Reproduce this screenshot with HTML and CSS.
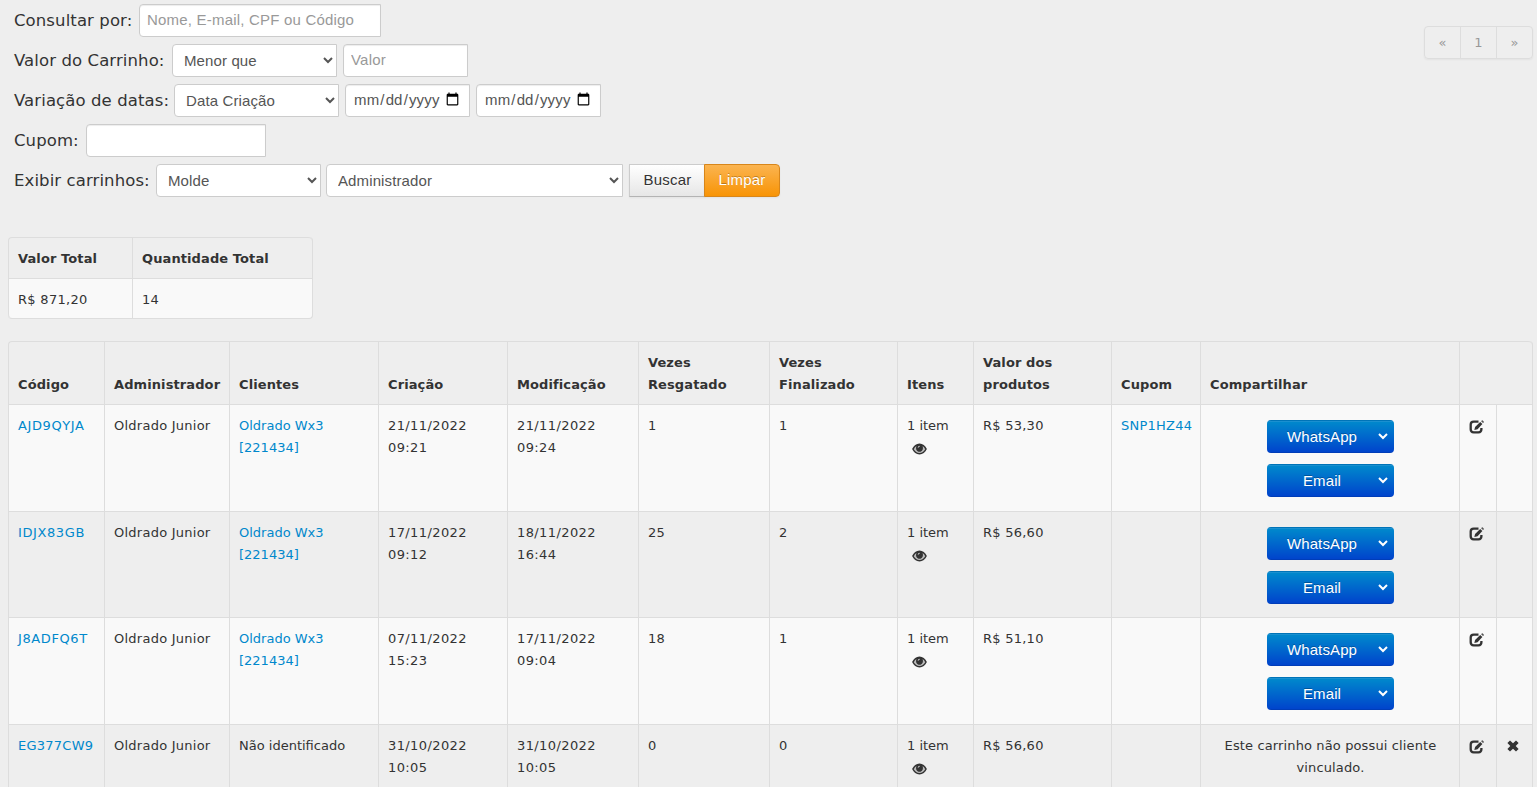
FILE: index.html
```html
<!DOCTYPE html>
<html lang="pt-br">
<head>
    <meta charset="UTF-8">
    <meta name="viewport" content="width=device-width, initial-scale=1.0">
    <title>Carrinhos</title>
    <link rel="stylesheet" href="styles.css">
</head>
<body>
    <!-- icons -->
    <svg class="sprite" width="0" height="0">
        <symbol id="icon-eye" viewBox="0 0 15 12">
            <path d="M7.500.5C4.300.5 1.700 2.600.1 6c1.600 3.400 4.200 5.500 7.400 5.500S13.300 9.400 14.900 6C13.300 2.600 10.700.5 7.500.5z" fill="#333"/>
            <path d="M1.800 6.200C2.500 4.700 3.300 3.600 4.400 2.900 3.400 6 4.700 8.700 7.500 8.700s4.100-2.700 3.100-5.800c1.100.7 1.900 1.800 2.600 3.300-1.300 2.300-3.300 3.700-5.700 3.700S3.100 8.500 1.800 6.200z" fill="#bbb"/>
            <path d="M5.700 4.800c.2-1.200 1-2 2.200-2-.3 1.100-1 1.800-2.200 2z" fill="#ddd"/>
        </symbol>
        <symbol id="icon-edit" viewBox="0 0 16 14">
            <path d="M9.500 1.600H4.700Q1.700 1.600 1.700 4.600v4.700q0 3 3 3h4.700q3 0 3-3V8" fill="none" stroke="#333" stroke-width="2.300"/>
            <path d="M5.300 10.100l.8-3.200L11.200 1.900l2.200 2.200L8.500 9.200z" fill="#333"/>
            <path d="M12.100 1.200l.7-.7q.5-.4 1 0l.9.9q.5.500 0 1l-.7.7z" fill="#555"/>
        </symbol>
        <symbol id="icon-remove" viewBox="0 0 12 12">
            <path d="M3 .4L6 3.300 9 .4 11.600 3 8.700 6l2.900 3L9 11.600 6 8.700 3 11.600.4 9l2.900-3L.4 3z" fill="#333"/>
        </symbol>
    </svg>

    <div class="topo">
        <form class="filtros">
            <div class="linha">
                <label class="l-busca">Consultar por:</label>
                <input type="text" class="campo-busca" placeholder="Nome, E-mail, CPF ou Código">
            </div>
            <div class="linha">
                <label class="l-valor">Valor do Carrinho:</label>
                <select><option>Menor que</option><option>Maior que</option></select>
                <input type="text" class="campo-valor" placeholder="Valor">
            </div>
            <div class="linha">
                <label class="l-datas">Variação de datas:</label>
                <select><option>Data Criação</option><option>Data Modificação</option></select>
                <input type="date">
                <input type="date">
            </div>
            <div class="linha">
                <label class="l-cupom">Cupom:</label>
                <input type="text" class="campo-cupom">
            </div>
            <div class="linha">
                <label class="l-exibir">Exibir carrinhos:</label>
                <select><option>Molde</option></select>
                <select class="select-admin"><option>Administrador</option></select>
                <div class="btn-group">
                    <button type="button" class="btn">Buscar</button><button type="button" class="btn btn-warning">Limpar</button>
                </div>
            </div>
        </form>
        <ul class="pagination">
            <li>«</li>
            <li>1</li>
            <li>»</li>
        </ul>
    </div>

    <table class="table table-total">
        <colgroup><col class="c-total"><col class="c-qtd"></colgroup>
        <thead>
            <tr><th>Valor Total</th><th>Quantidade Total</th></tr>
        </thead>
        <tbody>
            <tr><td>R$ 871,20</td><td>14</td></tr>
        </tbody>
    </table>

    <table class="table table-carrinhos">
        <colgroup>
            <col class="c-codigo"><col class="c-admin"><col class="c-cliente"><col class="c-criacao"><col class="c-modif">
            <col class="c-resgatado"><col class="c-finalizado"><col class="c-itens"><col class="c-valor"><col class="c-cupom">
            <col class="c-compartilhar"><col class="c-editar"><col class="c-remover">
        </colgroup>
        <thead>
            <tr>
                <th>Código</th>
                <th>Administrador</th>
                <th>Clientes</th>
                <th>Criação</th>
                <th>Modificação</th>
                <th>Vezes Resgatado</th>
                <th>Vezes Finalizado</th>
                <th>Itens</th>
                <th>Valor dos produtos</th>
                <th>Cupom</th>
                <th>Compartilhar</th>
                <th colspan="2"></th>
            </tr>
        </thead>
        <tbody>
            <tr>
                <td class="codigo"><a href="#">AJD9QYJA</a></td>
                <td>Oldrado Junior</td>
                <td class="cliente"><a href="#">Oldrado Wx3 [221434]</a></td>
                <td class="data">21/11/2022 09:21</td>
                <td class="data">21/11/2022 09:24</td>
                <td>1</td>
                <td>1</td>
                <td class="itens">1 item <svg class="icon-eye"><use href="#icon-eye"/></svg></td>
                <td>R$ 53,30</td>
                <td><a href="#">SNP1HZ44</a></td>
                <td class="compartilhar">
                    <select class="btn-primary"><option>WhatsApp</option></select>
                    <select class="btn-primary"><option>Email</option></select>
                </td>
                <td><svg class="icon-edit"><use href="#icon-edit"/></svg></td>
                <td></td>
            </tr>
            <tr>
                <td class="codigo"><a href="#">IDJX83GB</a></td>
                <td>Oldrado Junior</td>
                <td class="cliente"><a href="#">Oldrado Wx3 [221434]</a></td>
                <td class="data">17/11/2022 09:12</td>
                <td class="data">18/11/2022 16:44</td>
                <td>25</td>
                <td>2</td>
                <td class="itens">1 item <svg class="icon-eye"><use href="#icon-eye"/></svg></td>
                <td>R$ 56,60</td>
                <td></td>
                <td class="compartilhar">
                    <select class="btn-primary"><option>WhatsApp</option></select>
                    <select class="btn-primary"><option>Email</option></select>
                </td>
                <td><svg class="icon-edit"><use href="#icon-edit"/></svg></td>
                <td></td>
            </tr>
            <tr>
                <td class="codigo"><a href="#">J8ADFQ6T</a></td>
                <td>Oldrado Junior</td>
                <td class="cliente"><a href="#">Oldrado Wx3 [221434]</a></td>
                <td class="data">07/11/2022 15:23</td>
                <td class="data">17/11/2022 09:04</td>
                <td>18</td>
                <td>1</td>
                <td class="itens">1 item <svg class="icon-eye"><use href="#icon-eye"/></svg></td>
                <td>R$ 51,10</td>
                <td></td>
                <td class="compartilhar">
                    <select class="btn-primary"><option>WhatsApp</option></select>
                    <select class="btn-primary"><option>Email</option></select>
                </td>
                <td><svg class="icon-edit"><use href="#icon-edit"/></svg></td>
                <td></td>
            </tr>
            <tr>
                <td><a href="#">EG377CW9</a></td>
                <td>Oldrado Junior</td>
                <td class="cliente">Não identificado</td>
                <td class="data">31/10/2022 10:05</td>
                <td class="data">31/10/2022 10:05</td>
                <td>0</td>
                <td>0</td>
                <td class="itens">1 item <svg class="icon-eye"><use href="#icon-eye"/></svg></td>
                <td>R$ 56,60</td>
                <td></td>
                <td class="sem-cliente">Este carrinho não possui cliente vinculado.</td>
                <td><svg class="icon-edit"><use href="#icon-edit"/></svg></td>
                <td><svg class="icon-remove"><use href="#icon-remove"/></svg></td>
            </tr>
        </tbody>
    </table>
</body>
</html>
```
FILE: styles.css
```css
* {
    box-sizing: border-box;
}
html {
    overflow: hidden;
}
body {
    margin: 0;
    padding: 0 4px 0 8px;
    height: 787px;
    overflow: hidden;
    background-color: #eee;
    color: #333;
    font-family: Verdana, "DejaVu Sans", sans-serif;
    font-size: 13px;
    line-height: 22px;
}
a {
    color: #08c;
    text-decoration: none;
}
.sprite {
    position: absolute;
}

/* filtros */
.topo {
    display: flex;
    justify-content: space-between;
    align-items: flex-start;
    height: 237px;
}
.filtros {
    padding-left: 6px;
}
.linha {
    display: flex;
    align-items: center;
    height: 40px;
    gap: 6px;
}
.linha label {
    padding-top: 2px;
    font-size: 16.5px;
    line-height: 22px;
    letter-spacing: 0.1px;
    white-space: nowrap;
}
.l-busca { width: 119px; }
.l-valor { width: 152px; }
.l-datas { width: 154px; }
.l-cupom { width: 66px; }
.l-exibir { width: 136px; }
input,
select {
    height: 33px;
    border: 1px solid #ccc;
    border-radius: 4px 0 0 4px;
    background-color: #fff;
    color: #555;
    font-family: Arial, "Liberation Sans", sans-serif;
    font-size: 15px;
    margin: 0;
}
input {
    padding: 4px 7px 6px;
    box-shadow: inset 0 1px 1px rgba(0,0,0,0.075);
}
input::placeholder {
    color: #999;
    letter-spacing: 0.2px;
}
select {
    width: 165px;
    padding: 4px 6px 4px 7px;
    letter-spacing: 0.12px;
}
input[type="date"] {
    width: 125px;
    padding-top: 4px;
    padding-bottom: 5px;
    letter-spacing: 0.15px;
}
.campo-busca {
    width: 242px;
}
.campo-valor {
    width: 125px;
}
.campo-cupom {
    width: 180px;
}
.select-admin {
    width: 297px;
    margin-left: -1px;
}

/* botoes */
.btn-group {
    display: flex;
}
.btn {
    height: 33px;
    width: 76px;
    padding: 0 0 2px;
    border: 1px solid #ccc;
    border-bottom-color: #b3b3b3;
    border-right: 0;
    background: linear-gradient(#fff, #e6e6e6);
    color: #333;
    font-family: Arial, "Liberation Sans", sans-serif;
    font-size: 15px;
    letter-spacing: 0.2px;
    text-shadow: 0 1px 1px rgba(255,255,255,0.75);
    box-shadow: 0 1px 2px rgba(0,0,0,0.05);
}
.btn-warning {
    margin-left: -1px;
    border: 1px solid #d8861a;
    border-radius: 0 4px 4px 0;
    background: linear-gradient(#fbb450, #f89406);
    color: #fff;
    text-shadow: 0 -1px 0 rgba(0,0,0,0.25);
}
.btn-primary {
    display: block;
    width: 127px;
    margin: 0 auto 11px;
    padding: 4px 8px 4px 6px;
    border: 0 solid transparent;
    border-right-width: 3px;
    border-left-width: 1px;
    border-radius: 4px;
    background: linear-gradient(#0074b8 1px, #1a90d0 1px, #1a90d0 2px, #08c 2px, #04c 32px, #003db8 32px) border-box;
    color: #fff;
    text-align: center;
    text-align-last: center;
    text-shadow: 0 -1px 0 rgba(0,0,0,0.25);
}

/* paginacao */
.pagination {
    display: flex;
    margin: 26px 0 0;
    padding: 0;
    list-style: none;
    border: 1px solid #ddd;
    border-radius: 4px;
    box-shadow: 0 1px 2px rgba(0,0,0,0.05);
    color: #999;
}
.pagination li {
    width: 36px;
    height: 31px;
    line-height: 31px;
    text-align: center;
}
.pagination li:first-child {
    width: 35px;
}
.pagination li + li {
    border-left: 1px solid #ddd;
}

/* tabelas */
.table {
    table-layout: fixed;
    border-collapse: separate;
    border-spacing: 0;
    border: 1px solid #ddd;
    border-left: 0;
    border-top: 0;
    border-radius: 4px;
    letter-spacing: 0.25px;
}
.table th,
.table td {
    padding: 10px 8px 8px 9px;
    border-left: 1px solid #ddd;
    border-top: 1px solid #ddd;
    text-align: left;
    vertical-align: top;
}
.table th {
    vertical-align: bottom;
    letter-spacing: 0.1px;
}
.table th:first-child {
    border-top-left-radius: 4px;
}
.table th:last-child {
    border-top-right-radius: 4px;
}
.table tbody tr:nth-child(odd) td {
    background-color: #f9f9f9;
}
.table-total {
    width: 305px;
    margin-bottom: 22px;
}
.table-total td {
    padding-bottom: 7px;
}
.table-total tr:last-child td:first-child {
    border-bottom-left-radius: 4px;
}
.table-total tr:last-child td:last-child {
    border-bottom-right-radius: 4px;
}
.table-carrinhos {
    width: 1525px;
}
.table-carrinhos tbody tr {
    height: 106.7px;
}
.c-total { width: 124px; }
.c-qtd { width: 180px; }
.c-codigo { width: 96px; }
.c-admin { width: 125px; }
.c-cliente { width: 149px; }
.c-criacao { width: 129px; }
.c-modif,
.c-resgatado { width: 131px; }
.c-finalizado { width: 128px; }
.c-itens { width: 76px; }
.c-valor { width: 138px; }
.c-cupom { width: 89px; }
.c-compartilhar { width: 259px; }
.c-editar { width: 37px; }
.c-remover { width: 36px; }

.table .codigo {
    letter-spacing: 0.6px;
}
.table .cliente {
    letter-spacing: 0;
}
.table .data {
    letter-spacing: 0.4px;
}
.table .itens {
    letter-spacing: 0;
}
.table .compartilhar {
    padding: 15px 0 0;
}
.table .sem-cliente {
    text-align: center;
    letter-spacing: 0.13px;
}
.table-total td {
    letter-spacing: 0.3px;
}
.icon-eye {
    display: block;
    width: 15px;
    height: 12px;
    margin: 6px 0 0 5px;
}
.icon-edit {
    display: block;
    width: 16px;
    height: 14px;
    margin-top: 5px;
}
.icon-remove {
    display: block;
    width: 12px;
    height: 12px;
    margin: 5px 0 0 1px;
}
```
